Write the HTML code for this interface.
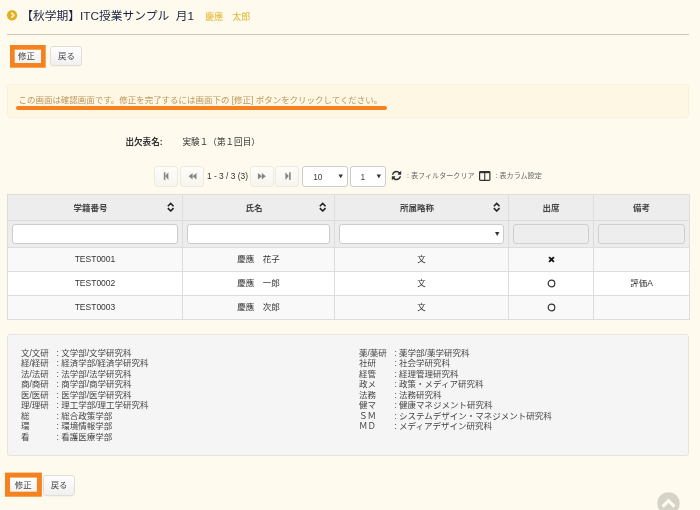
<!DOCTYPE html>
<html lang="ja">
<head>
<meta charset="utf-8">
<title>出欠確認</title>
<style>
html,body{margin:0;padding:0;}
body{width:700px;height:510px;overflow:hidden;background:#fefaee;position:relative;
  font-family:"Liberation Sans","Noto Sans CJK JP",sans-serif;color:#333;font-size:8.6px;}
.abs{position:absolute;white-space:nowrap;}
.title{left:21.3px;top:6.8px;font-size:11.75px;line-height:18px;color:#1c2340;}
.title b{font-weight:normal;}
.uname{left:205.3px;top:10.6px;font-size:9px;line-height:12px;color:#e4b62c;}
.hr{left:7px;top:34px;width:682px;height:1px;background:#c9c7c0;}
.btn{position:absolute;box-sizing:border-box;border:1px solid #e0ded6;border-radius:3px;
  background:linear-gradient(#ffffff,#f0f0f0);color:#444;text-align:center;white-space:nowrap;
  box-shadow:0 1px 1px rgba(0,0,0,.03);}
.hl{position:absolute;box-sizing:border-box;border:4.5px solid #f5821f;}
.alert{left:7px;top:84px;width:681.5px;height:33.6px;box-sizing:border-box;background:#fef7e3;border:1px solid #fbf1d8;border-radius:2.5px;}
.alerttxt{left:18.5px;top:93.5px;font-size:8.48px;line-height:13px;color:#b9975f;}
.uline{left:16px;top:105.7px;width:371px;height:4.6px;border-radius:2.3px;background:#f5821f;}
.pg{top:166px;height:21px;}
.btn.dis{background:linear-gradient(#fefdf9,#f7f5ee);border-color:#ece9e0;box-shadow:none;}
.sel{position:absolute;box-sizing:border-box;border:1px solid #ccc;border-radius:3px;background:#fff;top:166px;height:21px;}
.sel span{position:absolute;top:3.5px;font-size:8.4px;line-height:12px;color:#444;}
.sel i{position:absolute;top:8.5px;width:0;height:0;border-left:2.3px solid transparent;border-right:2.3px solid transparent;border-top:3.9px solid #333;}
.small{font-size:7.1px;line-height:10px;color:#666;}
table.grid{position:absolute;left:7px;top:194px;width:682px;border-collapse:collapse;table-layout:fixed;}
table.grid td,table.grid th{border:1px solid #ddd;padding:0;text-align:center;font-size:8.5px;font-weight:normal;color:#333;position:relative;}
table.grid th{background:#ededed;height:25px;font-weight:bold;color:#444;}
table.grid th.s{padding-right:9px;}
table.grid th span{position:relative;top:-0.5px;}
table.grid tr.r td span{position:relative;top:-0.5px;}
table.grid tr.r td span.j{top:-1.4px;}
table.grid tr.r td svg{position:relative;top:-1.2px;left:0.2px;}
table.grid tr.r td svg.c{top:-0.2px;}
table.grid tr.f td{background:#ededed;height:26px;}
table.grid tr.r td{height:23px;}
table.grid tr.o td{background:#f9f9f9;}
table.grid tr.e td{background:#fff;}
.inp{position:absolute;left:4.4px;right:4.4px;top:2.6px;height:20px;box-sizing:border-box;border:1px solid #ccc;border-radius:3px;background:#fff;}
.inp.dis{background:#eee;border-color:#cfcfcf;}
.sort{position:absolute;right:7.2px;top:7.1px;width:7.4px;height:10.2px;}
.well{left:7px;top:334px;width:682px;height:122px;box-sizing:border-box;background:#f5f5f5;border:1px solid #e6e4dc;border-radius:3px;}
.lg{font-size:8.5px;line-height:10.55px;color:#444;}
</style>
</head>
<body><div style="position:absolute;left:0;top:0;width:700px;height:510px;will-change:transform;">
<!-- title -->
<svg class="abs" style="left:0px;top:0px" width="24" height="24" viewBox="0 0 24 24"><circle cx="12.05" cy="15.25" r="5.15" fill="#e3b01f"/><path d="M11.3 12.8 L13.8 15.3 L11.3 17.8" fill="none" stroke="#fffdf2" stroke-width="1.5"/></svg>
<div class="abs title">【秋学期】<b>ITC</b>授業サンプル&nbsp; 月<b>1</b></div>
<div class="abs uname">慶應　太郎</div>
<div class="abs hr"></div>

<!-- top buttons -->
<div class="btn" style="left:11px;top:46px;width:31px;height:20px;line-height:18px;font-size:8.5px;">修正</div>
<svg class="abs" style="left:0;top:40px" width="60" height="32"><rect x="12.35" y="7.35" width="31" height="18" fill="none" stroke="#f5821f" stroke-width="4.7"/></svg>
<div class="btn" style="left:50.3px;top:45.8px;width:32.2px;height:20.4px;line-height:18.4px;font-size:8.5px;">戻る</div>

<!-- alert -->
<div class="abs alert"></div>
<div class="abs alerttxt">この画面は確認画面です。修正を完了するには画面下の [修正] ボタンをクリックしてください。</div>
<div class="abs uline"></div>

<!-- sheet name -->
<div class="abs" style="left:125.5px;top:136.2px;font-size:8.55px;line-height:13px;font-weight:bold;color:#333;">出欠表名:</div>
<div class="abs" style="left:182.5px;top:136.2px;font-size:8.6px;line-height:13px;color:#333;">実験１（第１回目）</div>

<!-- pager -->
<div class="btn pg dis" style="left:154px;width:24px;"></div>
<div class="btn pg dis" style="left:180px;width:24px;"></div>
<div class="abs" style="left:207px;top:169.6px;font-size:8.4px;line-height:12px;color:#333;">1 - 3 / 3 (3)</div>
<div class="btn pg dis" style="left:250px;width:24px;"></div>
<div class="btn pg dis" style="left:275px;width:24px;"></div>
<svg class="abs" style="left:150px;top:165px" width="160" height="25" viewBox="150 165 160 25" fill="#858585">
<rect x="163.8" y="172.2" width="1.6" height="7.7"/><path d="M168.4 172.2 L165.2 176.05 L168.4 179.9Z"/>
<path d="M192.6 173 L188.6 176.2 L192.6 179.4Z M196.5 173 L192.5 176.2 L196.5 179.4Z"/>
<path d="M257.9 173 L261.9 176.2 L257.9 179.4Z M261.8 173 L265.8 176.2 L261.8 179.4Z"/>
<path d="M285.4 172.2 L288.8 176.05 L285.4 179.9Z"/><rect x="289.1" y="172.2" width="1.6" height="7.7"/>
</svg>
<div class="sel" style="left:302px;width:45.5px;"><span style="left:10.2px;">10</span></div>
<div class="sel" style="left:350.4px;width:35.2px;"><span style="left:9.1px;">1</span></div>
<svg class="abs" style="left:391px;top:170.4px" width="11" height="11" viewBox="0 0 1792 1792"><path fill="#333" d="M1639 1056q0 5-1 7-64 268-268 434.500t-478 166.500q-146 0-282.500-55t-243.500-157l-129 129q-19 19-45 19t-45-19-19-45v-448q0-26 19-45t45-19h448q26 0 45 19t19 45-19 45l-137 137q71 66 161 102t187 36q134 0 250-65t186-179q11-17 53-117 8-23 30-23h192q13 0 22.500 9.500t9.500 22.500zm25-800v448q0 26-19 45t-45 19h-448q-26 0-45-19t-19-45 19-45l138-138q-148-137-349-137-134 0-250 65t-186 179q-11 17-53 117-8 23-30 23h-199q-13 0-22.500-9.500t-9.500-22.500v-7q65-268 270-434.500t480-166.500q146 0 284 55.500t245 156.500l130-129q19-19 45-19t45 19 19 45z"/></svg>
<div class="abs small" style="left:407px;top:170.8px;">: 表フィルタークリア</div>
<svg class="abs" style="left:479.2px;top:170.8px" width="11.5" height="10" viewBox="0 0 11.5 10"><rect x="0.6" y="0.6" width="10.3" height="8.8" rx="0.8" fill="none" stroke="#333" stroke-width="1.2"/><rect x="0.6" y="0.6" width="10.3" height="1.6" fill="#333"/><rect x="5.2" y="1" width="1.1" height="8" fill="#333"/></svg>
<div class="abs small" style="left:495.5px;top:170.8px;">: 表カラム設定</div>

<!-- grid -->
<table class="grid">
<colgroup><col style="width:175px"><col style="width:152px"><col style="width:174px"><col style="width:85px"><col style="width:96px"></colgroup>
<tr><th class="s"><span>学籍番号</span><svg class="sort" viewBox="0 0 8 11"><path d="M0.9 4.6 L4 1.5 L7.1 4.6 M0.9 6.6 L4 9.7 L7.1 6.6" fill="none" stroke="#222" stroke-width="1.7"/></svg></th>
<th class="s"><span>氏名</span><svg class="sort" viewBox="0 0 8 11"><path d="M0.9 4.6 L4 1.5 L7.1 4.6 M0.9 6.6 L4 9.7 L7.1 6.6" fill="none" stroke="#222" stroke-width="1.7"/></svg></th>
<th class="s"><span>所属略称</span><svg class="sort" viewBox="0 0 8 11"><path d="M0.9 4.6 L4 1.5 L7.1 4.6 M0.9 6.6 L4 9.7 L7.1 6.6" fill="none" stroke="#222" stroke-width="1.7"/></svg></th>
<th><span>出席</span></th><th><span>備考</span></th></tr>
<tr class="f"><td><div class="inp"></div></td><td><div class="inp"></div></td><td><div class="inp"></div></td><td><div class="inp dis"></div></td><td><div class="inp dis"></div></td></tr>
<tr class="r o"><td><span>TEST0001</span></td><td><span class="j">慶應　花子</span></td><td><span class="j">文</span></td><td><svg width="7" height="7" viewBox="0 0 7 7" style="vertical-align:middle"><path d="M1.1 1.1 L5.9 5.9 M5.9 1.1 L1.1 5.9" stroke="#1a1a1a" stroke-width="2"/></svg></td><td></td></tr>
<tr class="r e"><td><span>TEST0002</span></td><td><span class="j">慶應　一郎</span></td><td><span class="j">文</span></td><td><svg class="c" width="9" height="9" viewBox="0 0 9 9" style="vertical-align:middle"><circle cx="4.5" cy="4.5" r="3.3" fill="none" stroke="#333" stroke-width="1.2"/></svg></td><td><span class="j">評価A</span></td></tr>
<tr class="r o"><td><span>TEST0003</span></td><td><span class="j">慶應　次郎</span></td><td><span class="j">文</span></td><td><svg class="c" width="9" height="9" viewBox="0 0 9 9" style="vertical-align:middle"><circle cx="4.5" cy="4.5" r="3.3" fill="none" stroke="#333" stroke-width="1.2"/></svg></td><td></td></tr>
</table>

<svg class="abs" style="left:0;top:0" width="700" height="250" viewBox="0 0 700 250" fill="#333">
<path d="M495 232.1 h4.4 l-2.2 3.9Z"/>
<path d="M338.5 174.4 h4.4 l-2.2 3.8Z"/>
<path d="M376.6 174.4 h4.4 l-2.2 3.8Z"/>
</svg>
<!-- legend -->
<div class="abs well"></div>
<div class="abs lg" style="left:21px;top:347.5px;">文/文研<br>経/経研<br>法/法研<br>商/商研<br>医/医研<br>理/理研<br>総<br>環<br>看</div>
<div class="abs lg" style="left:56.5px;top:347.5px;">: 文学部/文学研究科<br>: 経済学部/経済学研究科<br>: 法学部/法学研究科<br>: 商学部/商学研究科<br>: 医学部/医学研究科<br>: 理工学部/理工学研究科<br>: 総合政策学部<br>: 環境情報学部<br>: 看護医療学部</div>
<div class="abs lg" style="left:359px;top:347.5px;">薬/薬研<br>社研<br>経管<br>政メ<br>法務<br>健マ<br>ＳＭ<br>ＭＤ</div>
<div class="abs lg" style="left:394.4px;top:347.5px;">: 薬学部/薬学研究科<br>: 社会学研究科<br>: 経理管理研究科<br>: 政策・メディア研究科<br>: 法務研究科<br>: 健康マネジメント研究科<br>: システムデザイン・マネジメント研究科<br>: メディアデザイン研究科</div>

<!-- bottom buttons -->
<div class="btn" style="left:8px;top:476px;width:32px;height:19px;line-height:17px;font-size:8.4px;padding-right:1.6px;">修正</div>
<svg class="abs" style="left:0;top:465px" width="60" height="40"><rect x="7.5" y="10.1" width="31.9" height="19.1" fill="none" stroke="#f5821f" stroke-width="5"/></svg>
<div class="btn" style="left:43.4px;top:475.4px;width:31.3px;height:20.2px;line-height:18px;font-size:8.4px;">戻る</div>

<!-- scroll top -->
<svg class="abs" style="left:656.5px;top:491.5px" width="23" height="23" viewBox="0 0 23 23"><circle cx="11.5" cy="11.5" r="11.2" fill="#d5d2c8"/><path d="M5.6 14.6 L11.5 8.7 L17.4 14.6" fill="none" stroke="#fefaee" stroke-width="3.2"/></svg>
</div></body>
</html>
